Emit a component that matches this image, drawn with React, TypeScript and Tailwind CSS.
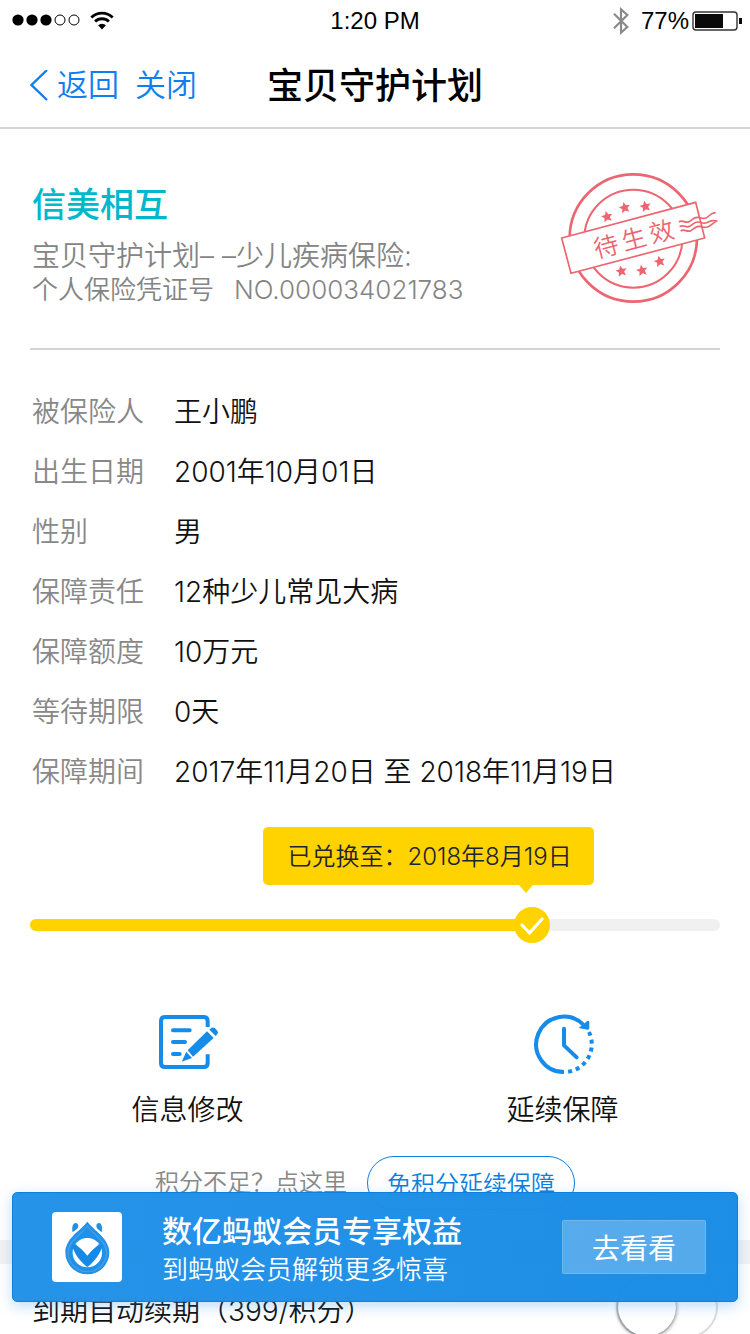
const policyRows = [
  { label: "被保险人", value: "王小鹏" },
  { label: "出生日期", value: "2001年10月01日" },
  { label: "性别", value: "男" },
  { label: "保障责任", value: "12种少儿常见大病" },
  { label: "保障额度", value: "10万元" },
  { label: "等待期限", value: "0天" },
  { label: "保障期间", value: "2017年11月20日 至 2018年11月19日" },
];

const starCenters = [
  [186, 170],
  [239, 143],
  [301, 139],
  [229, 333],
  [291, 331],
  [344, 304],
];

function StatusBar() {
  return (
    <div className="grid h-10 shrink-0 grid-cols-3 items-center px-3 font-['Liberation_Sans',sans-serif] text-2xl text-black">
      <div className="flex items-center gap-2">
        <svg className="h-3 w-[70px]" viewBox="0 0 70 12">
          {[6, 20, 34].map((x) => (
            <circle key={x} cx={x} cy="6" r="5.6" fill="#000" />
          ))}
          {[48, 62].map((x) => (
            <circle key={x} cx={x} cy="6" r="5" fill="none" stroke="#000" />
          ))}
        </svg>
        <svg className="h-[19px] w-6" viewBox="0 0 24 19" fill="none" stroke="#000">
          <path d="M1.3 6.6a15.2 15.2 0 0 1 21.4 0" strokeWidth="2.8" />
          <path d="M5.1 10.6a9.8 9.8 0 0 1 13.8 0" strokeWidth="2.8" />
          <path d="M12 18.4l-3.9-4.1a5.6 5.6 0 0 1 7.8 0z" fill="#000" stroke="none" />
        </svg>
      </div>
      <span className="pt-px text-center">1:20 PM</span>
      <div className="-mr-1 flex items-center justify-end gap-[3px] pt-px">
        <svg className="mr-2 h-7 w-[18px]" viewBox="0 0 54 84" fill="none" stroke="#8a8a8a" strokeWidth="6.5">
          <path d="M6 20l40 40-19 17V7l19 17L6 64" />
        </svg>
        <span>77%</span>
        <svg className="h-5 w-[50px]" viewBox="0 0 50 20">
          <rect x="1" y="1" width="44" height="18" rx="3" fill="none" stroke="#333" strokeWidth="1.4" />
          <rect x="3" y="3" width="28" height="14" fill="#0a0a0a" />
          <path d="M47 7h3v6h-3z" fill="#0a0a0a" />
        </svg>
      </div>
    </div>
  );
}

function NavBar() {
  return (
    <header className="relative flex h-[89px] shrink-0 items-center justify-center border-b-2 border-[#d4d4d4] pt-1">
      <nav className="absolute left-[29px] flex items-center gap-4 text-[31px] font-[350] text-[#0f7ef0]">
        <button className="flex items-center gap-2">
          <svg className="h-8 w-5" viewBox="0 0 20 32" fill="none" stroke="#0a7fee" strokeWidth="2.4">
            <path d="M18 0L2.5 15 18 30" />
          </svg>
          返回
        </button>
        <button>关闭</button>
      </nav>
      <h1 className="text-4xl font-medium text-black">宝贝守护计划</h1>
    </header>
  );
}

function Stamp() {
  return (
    <svg
      className="h-[132px] w-40 shrink-0"
      viewBox="45 39 480 396"
      fill="none"
      stroke="#ec6570"
      strokeWidth="5"
    >
      <circle cx="265" cy="234" r="191" strokeWidth="8" />
      <circle cx="265" cy="236" r="147" strokeWidth="6" />
      <path d="M50 234L452 127 479 234 78 340z" fill="#fff" />
      {starCenters.map(([x, y]) => (
        <path
          key={`${x}-${y}`}
          transform={`translate(${x} ${y}) rotate(-12)`}
          d="M0-17l5 11 12 1-9 8 3 12-11-6-11 6 3-12-9-8 12-1z"
          fill="#ec6570"
          stroke="none"
        />
      ))}
      <g
        transform="rotate(-14.8 266 234)"
        className="font-[350]"
        fill="#ec6570"
        stroke="none"
        fontSize="74"
        textAnchor="middle"
      >
        <text x="180" y="264">待</text>
        <text x="266" y="264">生</text>
        <text x="352" y="264">效</text>
      </g>
      <path d="M402 186c11-8 19 5 30-1s14-14 26-13 14 6 25 2 14-18 29-15" />
      <path d="M404 200c11-8 19 5 30-1s14-14 26-13 14 6 25 2 16-10 33-4" />
      <path d="M407 213c11-8 19 5 30-1s14-14 26-13 14 6 25 2 14-12 24-15" />
    </svg>
  );
}

function PolicyHeader() {
  return (
    <section className="mx-[30px] flex items-start justify-between border-b-2 border-[#d4d4d4] pt-11 pb-[42px]">
      <div className="pt-2 pl-[2px] font-[350] text-[#848484]">
        <h2 className="text-[34px] leading-[48px] font-medium text-[#00b8cc]">信美相互</h2>
        <p className="pt-[9px] text-[28px] leading-9">宝贝守护计划– –少儿疾病保险:</p>
        <p className="flex gap-5 text-[26px] leading-8">
          <span>个人保险凭证号</span>
          <span>NO.000034021783</span>
        </p>
      </div>
      <Stamp />
    </section>
  );
}

function RedeemProgress() {
  return (
    <div className="mx-[30px] mt-[117px] h-3 rounded-full bg-[#f0f0f0]">
      <div className="relative h-3 w-[73%] rounded-full bg-[#ffd300]">
        <div className="absolute right-[-60px] bottom-[46px] rounded-[5px] bg-[#ffd300] pt-3 pr-[22px] pb-[10px] pl-6 text-2xl leading-9 font-[350] whitespace-nowrap text-[#1d2235]">
          已兑换至：2018年8月19日
          <svg className="absolute right-[60px] top-full h-2 w-4" viewBox="0 0 16 8">
            <path d="M1 0h14L8 8z" fill="#ffd300" />
          </svg>
        </div>
        <svg className="absolute -top-3 -right-4 size-9" viewBox="0 0 36 36">
          <circle cx="18" cy="18" r="18" fill="#ffd300" />
          <path
            d="M8 18l7.5 8L28 12"
            fill="none"
            stroke="#fff"
            strokeWidth="3.2"
            strokeLinecap="round"
            strokeLinejoin="round"
          />
        </svg>
      </div>
    </div>
  );
}

function EditIcon() {
  return (
    <svg className="h-[60px] w-[62px]" viewBox="114 39 186 180" fill="none" stroke="#158cea" strokeWidth="12">
      <path d="M266 78V60q0-12-12-12H138q-12 0-12 12v126q0 12 12 12h116q12 0 12-12v-26" />
      <path d="M162 88h50M162 123h36M162 159h20" strokeLinecap="round" />
      <g fill="#158cea" stroke="none">
        <path d="M264 91l20 20-62 56-16-19z" />
        <path d="M202 152l17 19-31 11z" />
        <path d="M271 86l6-5q6-3 11 1l7 7q4 5 0 10l-5 6z" />
      </g>
    </svg>
  );
}

function RenewIcon() {
  return (
    <svg className="h-[60px] w-[62px]" viewBox="96 39 186 180" fill="none" stroke="#158cea" strokeWidth="12">
      <path d="M192 213a83 83 0 1 1 58-142" />
      <path d="M267 93a84 84 0 0 1-67 120" strokeDasharray="12 12" />
      <path d="M192 83v50l38 36" strokeLinecap="round" strokeLinejoin="round" />
      <path d="M236 81l26-21q6-2 6 4v17q0 5-5 5z" fill="#158cea" stroke="none" />
    </svg>
  );
}

function Actions() {
  return (
    <div className="mt-[83px] grid grid-cols-2 text-[28px] leading-10 font-[350] text-[#111]">
      <button className="flex flex-col items-center gap-4">
        <EditIcon />
        信息修改
      </button>
      <button className="flex flex-col items-center gap-4">
        <RenewIcon />
        延续保障
      </button>
    </div>
  );
}

function MemberBanner() {
  return (
    <aside className="absolute inset-x-3 bottom-8 flex h-[110px] items-center rounded-[5px] border border-[#0c7fdf] bg-linear-to-r from-[#2191e8]/98 to-[#188ce5]/98 pr-[31px] pl-[39px] text-white shadow-[0_4px_14px_rgba(30,140,240,0.3)]">
      <svg className="size-[70px] shrink-0 rounded bg-white" viewBox="156 189 210 210">
        <g fill="#2191e8">
          <path d="M262 218C243 244 196 268 196 310a66 66 0 0 0 132 0C328 268 281 244 262 218z" />
          <path d="M218 250c-3-13-1-27 9-28 9 0 10 12 4 18zM305 250c3-13 1-27-8-28-9 0-10 12-4 18z" />
        </g>
        <path d="M262 231C245 256 204 276 204 310a58 58 0 0 0 116 0C320 276 279 256 262 231z" fill="none" stroke="#469ee8" strokeWidth="4" />
        <circle cx="262" cy="311" r="44" fill="#fff" />
        <path
          d="M216 290c9-7 17-5 23 3l23 27 23-27c6-8 14-10 23-3-8 25-24 47-46 64-22-17-38-39-46-64z"
          fill="#1689e6"
        />
        <path d="M228 287q34-17 68 0l-34 28z" fill="#fff" />
      </svg>
      <div className="flex-1 pt-[3px] pl-10 whitespace-nowrap">
        <p className="text-3xl leading-[42px] font-medium">数亿蚂蚁会员专享权益</p>
        <p className="text-[26px] leading-9 font-[350]">到蚂蚁会员解锁更多惊喜</p>
      </div>
      <button className="h-[54px] w-36 rounded-xs border border-white/15 bg-white/25 pt-1 text-[28px] leading-10">
        去看看
      </button>
    </aside>
  );
}

export default function App() {
  return (
    <div className="relative flex h-screen flex-col overflow-hidden bg-white font-['Inter','Noto_Sans_CJK_SC',sans-serif]">
      <StatusBar />
      <NavBar />
      <main className="min-h-0 flex-1 overflow-y-auto [scrollbar-width:none]">
        <PolicyHeader />
        <dl className="px-8 pt-8 text-[28px] leading-[60px] font-[350]">
          {policyRows.map((row) => (
            <div key={row.label} className="flex">
              <dt className="w-[142px] text-[#888]">{row.label}</dt>
              <dd className="text-[#111]">{row.value}</dd>
            </div>
          ))}
        </dl>
        <RedeemProgress />
        <Actions />
        <div className="mt-[26px] flex items-start justify-center gap-5 pb-[30px] pr-5 text-2xl leading-[54px] font-[350]">
          <span className="text-[#888]">积分不足？点这里</span>
          <button className="h-[54px] rounded-full border border-[#0c7fdf] px-[19px] pt-px text-[#0c7fdf]">
            免积分延续保障
          </button>
        </div>
        <div className="h-6 bg-[#f3f3f3]" />
        <div className="flex items-center justify-between px-8 pt-3 pb-10 text-[28px] font-[350] text-[#111]">
          <label htmlFor="auto-renew" className="pt-2">
            到期自动续期（399/积分）
          </label>
          <input
            id="auto-renew"
            type="checkbox"
            className="h-[62px] w-[102px] appearance-none rounded-full border-2 border-[#d8dde2] bg-white before:block before:size-[58px] before:rounded-full before:bg-white before:shadow-[0_1px_4px_rgba(0,0,0,0.6)] checked:bg-[#0c7fdf] checked:before:ml-10"
          />
        </div>
      </main>
      <MemberBanner />
    </div>
  );
}
